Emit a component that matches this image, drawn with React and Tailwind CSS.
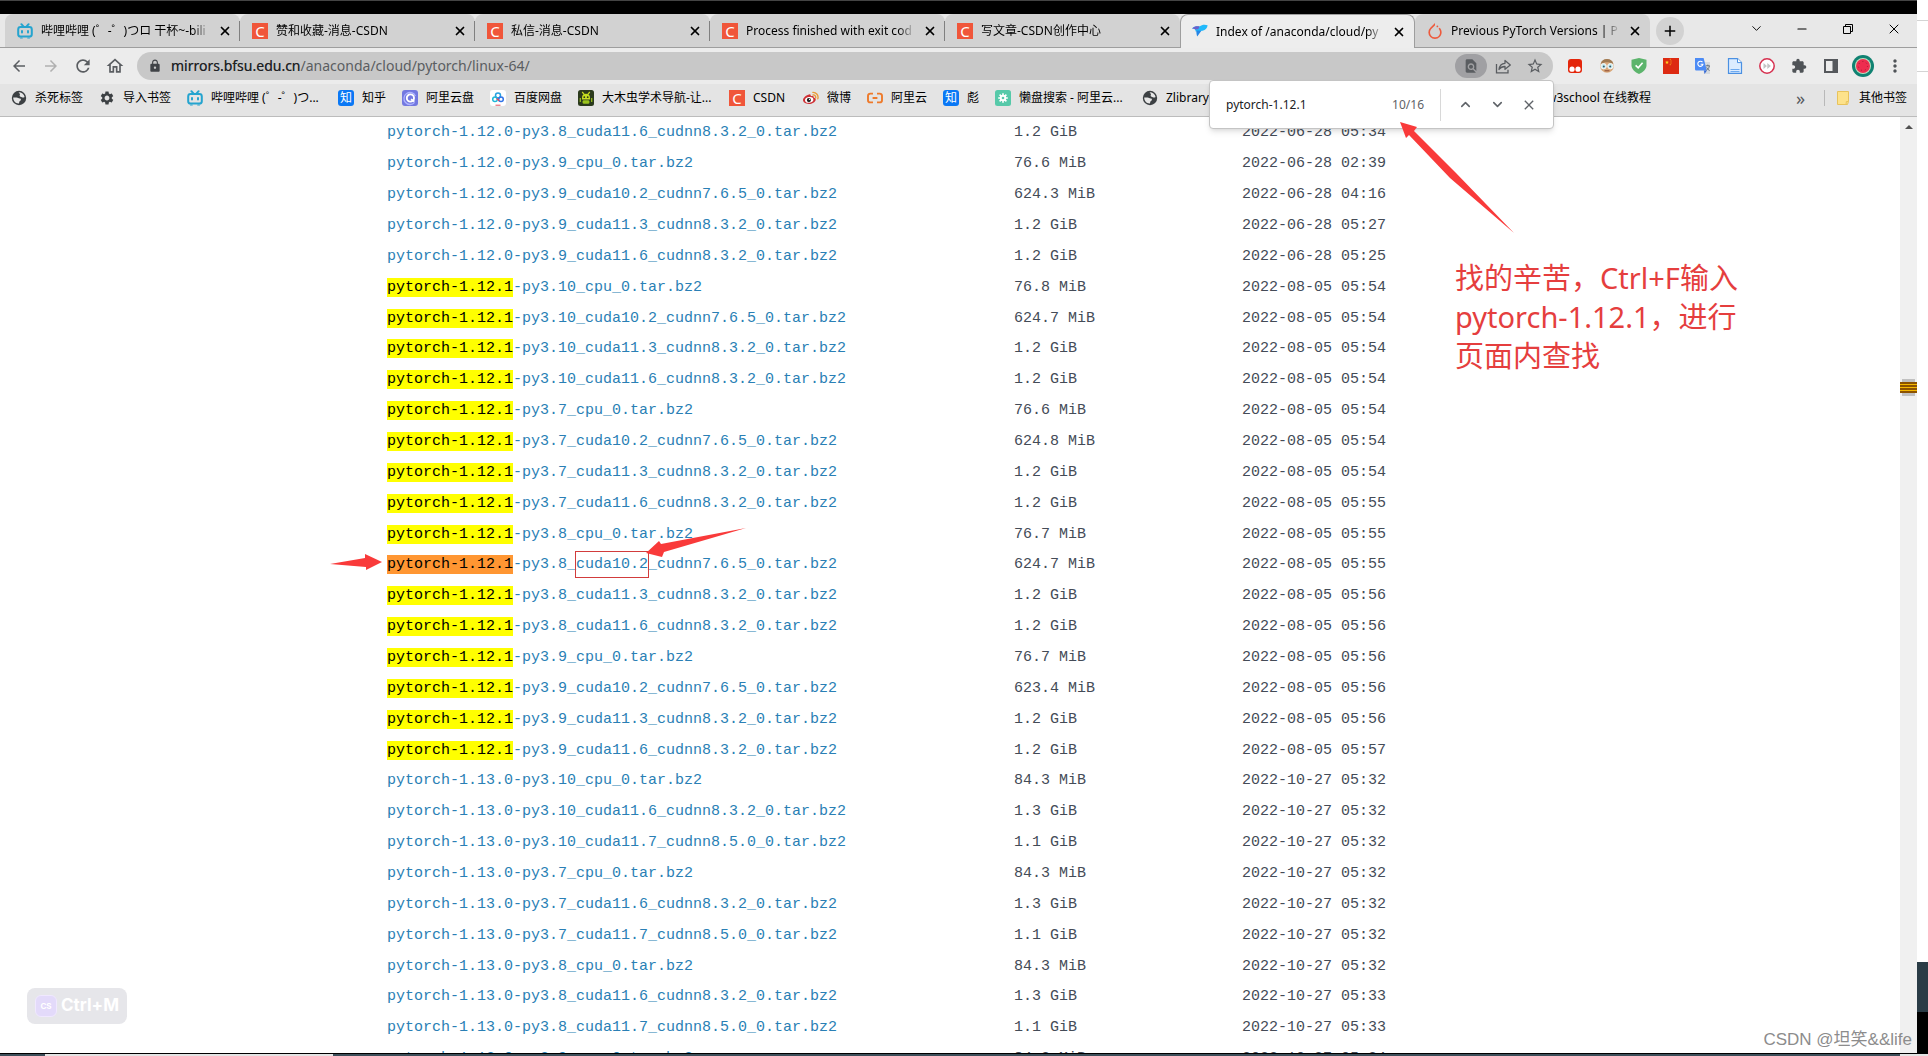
import { useState } from "react";
import { ChevronDown, ChevronUp, Minus, X } from "lucide-react";
import {
    MdArrowBack,
    MdArrowForward,
    MdRefresh,
    MdOutlineHome,
    MdLock,
    MdStarOutline,
    MdFindInPage,
    MdSettings,
    MdExtension,
    MdMoreVert,
    MdClose,
    MdAdd,
} from "react-icons/md";
import { SiPytorch } from "react-icons/si";

const files = [
    ["1.12.0", "-py3.8_cuda11.6_cudnn8.3.2_0.tar.bz2", "1.2 GiB", "2022-06-28 05:34"],
    ["1.12.0", "-py3.9_cpu_0.tar.bz2", "76.6 MiB", "2022-06-28 02:39"],
    ["1.12.0", "-py3.9_cuda10.2_cudnn7.6.5_0.tar.bz2", "624.3 MiB", "2022-06-28 04:16"],
    ["1.12.0", "-py3.9_cuda11.3_cudnn8.3.2_0.tar.bz2", "1.2 GiB", "2022-06-28 05:27"],
    ["1.12.0", "-py3.9_cuda11.6_cudnn8.3.2_0.tar.bz2", "1.2 GiB", "2022-06-28 05:25"],
    ["1.12.1", "-py3.10_cpu_0.tar.bz2", "76.8 MiB", "2022-08-05 05:54"],
    ["1.12.1", "-py3.10_cuda10.2_cudnn7.6.5_0.tar.bz2", "624.7 MiB", "2022-08-05 05:54"],
    ["1.12.1", "-py3.10_cuda11.3_cudnn8.3.2_0.tar.bz2", "1.2 GiB", "2022-08-05 05:54"],
    ["1.12.1", "-py3.10_cuda11.6_cudnn8.3.2_0.tar.bz2", "1.2 GiB", "2022-08-05 05:54"],
    ["1.12.1", "-py3.7_cpu_0.tar.bz2", "76.6 MiB", "2022-08-05 05:54"],
    ["1.12.1", "-py3.7_cuda10.2_cudnn7.6.5_0.tar.bz2", "624.8 MiB", "2022-08-05 05:54"],
    ["1.12.1", "-py3.7_cuda11.3_cudnn8.3.2_0.tar.bz2", "1.2 GiB", "2022-08-05 05:54"],
    ["1.12.1", "-py3.7_cuda11.6_cudnn8.3.2_0.tar.bz2", "1.2 GiB", "2022-08-05 05:55"],
    ["1.12.1", "-py3.8_cpu_0.tar.bz2", "76.7 MiB", "2022-08-05 05:55"],
    ["1.12.1", "-py3.8_cuda10.2_cudnn7.6.5_0.tar.bz2", "624.7 MiB", "2022-08-05 05:55"],
    ["1.12.1", "-py3.8_cuda11.3_cudnn8.3.2_0.tar.bz2", "1.2 GiB", "2022-08-05 05:56"],
    ["1.12.1", "-py3.8_cuda11.6_cudnn8.3.2_0.tar.bz2", "1.2 GiB", "2022-08-05 05:56"],
    ["1.12.1", "-py3.9_cpu_0.tar.bz2", "76.7 MiB", "2022-08-05 05:56"],
    ["1.12.1", "-py3.9_cuda10.2_cudnn7.6.5_0.tar.bz2", "623.4 MiB", "2022-08-05 05:56"],
    ["1.12.1", "-py3.9_cuda11.3_cudnn8.3.2_0.tar.bz2", "1.2 GiB", "2022-08-05 05:56"],
    ["1.12.1", "-py3.9_cuda11.6_cudnn8.3.2_0.tar.bz2", "1.2 GiB", "2022-08-05 05:57"],
    ["1.13.0", "-py3.10_cpu_0.tar.bz2", "84.3 MiB", "2022-10-27 05:32"],
    ["1.13.0", "-py3.10_cuda11.6_cudnn8.3.2_0.tar.bz2", "1.3 GiB", "2022-10-27 05:32"],
    ["1.13.0", "-py3.10_cuda11.7_cudnn8.5.0_0.tar.bz2", "1.1 GiB", "2022-10-27 05:32"],
    ["1.13.0", "-py3.7_cpu_0.tar.bz2", "84.3 MiB", "2022-10-27 05:32"],
    ["1.13.0", "-py3.7_cuda11.6_cudnn8.3.2_0.tar.bz2", "1.3 GiB", "2022-10-27 05:32"],
    ["1.13.0", "-py3.7_cuda11.7_cudnn8.5.0_0.tar.bz2", "1.1 GiB", "2022-10-27 05:32"],
    ["1.13.0", "-py3.8_cpu_0.tar.bz2", "84.3 MiB", "2022-10-27 05:32"],
    ["1.13.0", "-py3.8_cuda11.6_cudnn8.3.2_0.tar.bz2", "1.3 GiB", "2022-10-27 05:33"],
    ["1.13.0", "-py3.8_cuda11.7_cudnn8.5.0_0.tar.bz2", "1.1 GiB", "2022-10-27 05:33"],
    ["1.13.0", "-py3.9_cpu_0.tar.bz2", "84.3 MiB", "2022-10-27 05:34"],
];

const CURRENT = 14;

/* ---------- site icons ---------- */

function Bilibili() {
    return (
        <svg viewBox="0 0 16 16" className="size-4 shrink-0" fill="none" stroke="#25a4cf" strokeWidth="2" strokeLinecap="round">
            <rect x="1.2" y="4" width="13.6" height="9.6" rx="2.4" />
            <path d="M4.4 1.2l2 2.2M11.6 1.2l-2 2.2M5 8v1.4M11 8v1.4" />
            <path d="M3.6 15h1.6M10.8 15h1.6" strokeWidth="1.2" />
        </svg>
    );
}

function Csdn() {
    return (
        <span className="flex size-4 shrink-0 items-center justify-center bg-[#f0563a] text-[15px] leading-4 text-white">C</span>
    );
}

function Zhihu() {
    return (
        <span className="flex size-4 shrink-0 items-center justify-center rounded-[3px] bg-[#0a78f5] text-[12px] leading-4 text-white">知</span>
    );
}

function Globe() {
    return (
        <svg viewBox="0 0 16 16" className="size-4 shrink-0">
            <circle cx="8" cy="8" r="7.2" fill="#3c4043" />
            <path d="M2.2 7.6h3.4c1.4 0 1.8 1 3 1 .9 0 1.5.5 1.3 1.4-.2.8-1.2.9-1.5 1.6l-.5 1.9C4.6 13.7 2.2 10.9 2.2 7.6z" fill="#e6e6e6" />
            <path d="M7.6 2.3c3 0 5.4 1.7 6 4.7-.9.7-2 .8-2.8.2-.7-.6-1.800-.3-2.100-1.200-.3-.8.5-1.300.2-2-.3-.6-1-.7-1.300-1.700z" fill="#e6e6e6" />
        </svg>
    );
}

function AliyunDrive() {
    return (
        <svg viewBox="0 0 16 16" className="size-4 shrink-0">
            <rect width="16" height="16" rx="3" fill="#7378e0" />
            <path d="M12.6 12.3A6 6 0 1 1 13.4 6" fill="none" stroke="#aeb4ff" strokeWidth="1.3" />
            <circle cx="8.4" cy="8" r="3.6" fill="none" stroke="#fff" strokeWidth="1.9" />
            <path d="M9 9.2l3.4 2.4" stroke="#fff" strokeWidth="1.8" />
        </svg>
    );
}

function BaiduDrive() {
    return (
        <svg viewBox="0 0 16 16" className="size-4 shrink-0" fill="none" strokeWidth="1.5">
            <rect width="16" height="16" rx="3" fill="#fff" />
            <circle cx="8" cy="5.5" r="2.5" stroke="#28a0e0" />
            <circle cx="5" cy="9.3" r="2.3" stroke="#20b6d8" />
            <circle cx="11" cy="9.3" r="2.3" stroke="#3274e8" />
            <path d="M6.7 8.5l2.6 2.3" stroke="#e54b5b" />
            <path d="M5.5 15.2h5" stroke="#e54b5b" strokeWidth="1" />
        </svg>
    );
}

function Bug() {
    return (
        <svg viewBox="0 0 16 16" className="size-4 shrink-0">
            <rect width="16" height="16" rx="2.5" fill="#2b3a1c" />
            <path d="M4.2 2l2 2.4M11.8 2l-2 2.4" stroke="#c6e020" strokeWidth="1.2" />
            <path d="M4 8a4 4.2 0 0 1 8 0v1.5H4z" fill="#c6e020" />
            <rect x="4.6" y="10.2" width="6.8" height="3.6" rx="1.4" fill="#9bc41c" />
            <path d="M2.3 8v4M13.7 8v4" stroke="#9bc41c" strokeWidth="1.2" />
            <circle cx="6.3" cy="7.2" r=".9" fill="#2b3a1c" />
            <circle cx="9.7" cy="7.2" r=".9" fill="#2b3a1c" />
        </svg>
    );
}

function Weibo() {
    return (
        <svg viewBox="0 0 16 16" className="size-4 shrink-0" fill="none">
            <path d="M6.2 4.4C7.400 4.200 8 5 7.700 6.200c1.600-.6 3.200-.4 3 1.200 1.600.4 2.300 1.300 2 2.500-.5 2.300-3.500 4-6.800 4C2.600 13.900 0 12.300 0 10c0-2.300 3.500-5.200 6.200-5.600z" fill="#cf2f34" />
            <ellipse cx="6.200" cy="9.900" rx="4.200" ry="2.900" fill="#fff" transform="rotate(-8 6.200 9.900)" />
            <circle cx="5.900" cy="10.100" r="2.100" fill="#222" />
            <circle cx="6.600" cy="9.400" r=".6" fill="#fff" />
            <path d="M10 5a2.300 2.300 0 0 1 2.600 3M9.800 2.300a5 5 0 0 1 5 6.500" stroke="#eb9a35" strokeWidth="1.300" strokeLinecap="round" />
        </svg>
    );
}

function Aliyun() {
    return (
        <svg viewBox="0 0 16 16" className="size-4 shrink-0" fill="none" stroke="#ee7a2b" strokeWidth="1.9">
            <path d="M6 3.6H3.2A2.2 2.2 0 0 0 1 5.8v4.400a2.200 2.200 0 0 0 2.200 2.200H6M10 3.600h2.800A2.200 2.200 0 0 1 15 5.800v4.400a2.200 2.200 0 0 1-2.200 2.200H10M5.600 8h4.800" />
        </svg>
    );
}

function Lanpan() {
    return (
        <svg viewBox="0 0 16 16" className="size-4 shrink-0">
            <rect width="16" height="16" rx="2.5" fill="#56c9a9" />
            <path d="M8 3.2v9.6M3.2 8h9.6M4.6 4.6l6.8 6.8M11.4 4.6l-6.8 6.8" stroke="#fff" strokeWidth="1.6" />
            <circle cx="8" cy="8" r="3.2" fill="#fff" />
            <circle cx="8" cy="8" r="1.3" fill="#56c9a9" />
        </svg>
    );
}

function Bird() {
    return (
        <svg viewBox="0 0 16 16" className="size-4 shrink-0">
            <path d="M0 4.600C2 2.200 5 2 7.600 2.400 10 .4 13 .3 15.600 1.200c-.3 2.600-2 5-5 5.600L3.600 7.400C3.800 5.900 2.400 4.600 0 4.600z" fill="#21b9fb" />
            <path d="M0 4.600C2 2.200 5 2 7.600 2.400L6.200 5.200 3.400 5.600C2.600 4.900 1.400 4.600 0 4.600z" fill="#6f5fc8" />
            <path d="M4.400 6.400l5 .4-4.200 5.600c-.5-1.600-1-4-.8-6z" fill="#2486e6" />
        </svg>
    );
}

function Folder() {
    return (
        <svg viewBox="0 0 16 16" className="size-4 shrink-0">
            <path d="M2.5 1.500h11v10l-1 3h-10z" fill="#fde28b" stroke="#e8c35c" />
            <path d="M11 14.500l.4-3h2" fill="none" stroke="#e8c35c" />
        </svg>
    );
}

/* ---------- extension icons ---------- */

const extensions = [
    ["Tampermonkey", (
        <svg viewBox="0 0 16 16" className="size-4">
            <rect x="1" y="1" width="14" height="14" rx="3" fill="#e4260b" />
            <circle cx="5" cy="11.2" r="2.6" fill="#fff" />
            <circle cx="11" cy="11.2" r="2.6" fill="#fff" />
        </svg>
    )],
    ["Reader", (
        <svg viewBox="0 0 16 16" className="size-4">
            <circle cx="8" cy="8" r="6.8" fill="#d9a87a" />
            <path d="M1.6 6a6.6 6.6 0 0 1 12.8 0C10 3.6 6 3.6 1.6 6z" fill="#a07a52" />
            <circle cx="4.6" cy="8.2" r="2.7" fill="#c8edf0" stroke="#f5f5f5" />
            <circle cx="11.4" cy="8.2" r="2.7" fill="#c8edf0" stroke="#f5f5f5" />
            <circle cx="4.8" cy="8.4" r="1" fill="#34576b" />
            <circle cx="11.2" cy="8.4" r="1" fill="#34576b" />
            <path d="M5.6 12.8h4.8" stroke="#8c4b32" />
        </svg>
    )],
    ["Adblocker", (
        <svg viewBox="0 0 16 16" className="size-4">
            <path d="M8 0l7.5 1.8v5.4C15.5 11 12 14.4 8 16 4 14.4.5 11 .5 7.2V1.8z" fill="#5cb46c" />
            <path d="M4.6 7.3l2.6 2.5 4.4-5" fill="none" stroke="#fff" strokeWidth="1.6" />
        </svg>
    )],
    ["China", (
        <svg viewBox="0 0 16 16" className="size-4">
            <rect width="16" height="16" fill="#dd2a12" />
            <path d="M4 2.4l.6 1.3 1.3.1-1 .9.3 1.300L4 5.300l-1.200.7.3-1.300-1-.9 1.300-.1z" fill="#ffcf22" />
            <path d="M6.800 1.300h.8M7.600 3h.8M7.600 5h.8M6.800 6.700h.8" stroke="#ffcf22" />
        </svg>
    )],
    ["Translate", (
        <svg viewBox="0 0 16 16" className="size-4">
            <path d="M7 4h8v12H9z" fill="#d6dade" />
            <path d="M0 0h8.600l3.200 12.400H1.200A1.200 1.200 0 0 1 0 11.200z" fill="#4c8bf5" />
            <path d="M7.500 4.200A2.600 2.600 0 1 0 8 6.200H5.600" fill="none" stroke="#fff" strokeWidth="1.100" />
            <path d="M9 12.400h3L9.500 16z" fill="#3367d6" />
            <path d="M10.800 7.800h4M12.800 6.600v1.200M14.400 8c-.4 2-1.600 3.400-3 4.200M11.600 9.400c.6 1.500 1.800 2.500 3 3.200" fill="none" stroke="#5f6b78" strokeWidth=".9" />
        </svg>
    )],
    ["Document", (
        <svg viewBox="0 0 16 16" className="size-4">
            <path d="M1.500.6h9l4 4v10.800h-13z" fill="#dcecff" stroke="#4a90e2" strokeWidth="1.200" />
            <path d="M10.500.6v4h4" fill="#fff" stroke="#4a90e2" />
            <path d="M3.500 11.500h9M3.500 13.500h9" stroke="#6eaaf0" strokeWidth="1.200" />
        </svg>
    )],
    ["Speed", (
        <svg viewBox="0 0 16 16" className="size-4">
            <circle cx="8" cy="8" r="7.2" fill="#fff" stroke="#d6304f" strokeWidth="1.5" />
            <path d="M4.500 5v6L8 8zM8.300 5v6l3.600-3z" fill="#c4c4c4" />
        </svg>
    )],
    ["Extensions", <MdExtension className="size-4 text-[#4f5357]" />],
    ["Side panel", (
        <svg viewBox="0 0 16 16" className="size-4">
            <path d="M2 2h12v12H2z" fill="none" stroke="#55585c" strokeWidth="2" />
            <path d="M9.500 2H14v12H9.500z" fill="#55585c" />
        </svg>
    )],
    ["Profile", (
        <svg viewBox="0 0 22 22" className="size-[22px]">
            <circle cx="11" cy="11" r="11" fill="#108272" />
            <circle cx="11" cy="11" r="8" fill="#bfe0c0" />
            <circle cx="11" cy="11" r="7" fill="#ee2d4f" />
            <circle cx="11" cy="11" r="4.5" fill="none" stroke="#9e1f38" strokeDasharray="1 3" />
        </svg>
    )],
    ["Menu", <MdMoreVert className="size-5 text-[#4f5357]" />],
];

const tabs = [
    [<Bilibili />, "哔哩哔哩 (゜-゜)つロ 干杯~-bili"],
    [<Csdn />, "赞和收藏-消息-CSDN"],
    [<Csdn />, "私信-消息-CSDN"],
    [<Csdn />, "Process finished with exit cod"],
    [<Csdn />, "写文章-CSDN创作中心"],
    [<Bird />, "Index of /anaconda/cloud/py"],
    [<SiPytorch className="size-4 shrink-0 text-[#ee5a3c]" />, "Previous PyTorch Versions | P"],
];

const bookmarks = [
    [<Globe />, "杀死标签", "w-12"],
    [<MdSettings className="size-4 shrink-0 text-[#3c4043]" />, "导入书签", "w-12"],
    [<Bilibili />, "哔哩哔哩 (゜-゜)つ...", "w-[111px]"],
    [<Zhihu />, "知乎", "w-6"],
    [<AliyunDrive />, "阿里云盘", "w-12"],
    [<BaiduDrive />, "百度网盘", "w-12"],
    [<Bug />, "大木虫学术导航-让...", "w-[111px]"],
    [<Csdn />, "CSDN", "w-[34px]"],
    [<Weibo />, "微博", "w-6"],
    [<Aliyun />, "阿里云", "w-9"],
    [<Zhihu />, "彪", "w-3"],
    [<Lanpan />, "懒盘搜索 - 阿里云...", "w-[107px]"],
    [<Globe />, "Zlibrary", "w-[363px]"],
];

function TabStrip({ active, onSelect }) {
    return (
        <div className="flex h-[34px] items-stretch border-b border-[#9e9e9e] bg-[#e8e8e8] pl-[5px]">
            {tabs.map(([icon, title], i) => (
                <div
                    key={title}
                    className={
                        i === active
                            ? "-mb-px flex w-[235px] min-w-0 items-center gap-2 rounded-t-lg border border-b-0 border-[#9e9e9e] bg-[#ededed] pl-[11px] pr-2"
                            : "flex w-[235px] min-w-0 items-center gap-2 rounded-t-lg bg-[#d2d2d2] pl-3 pr-2"
                    }
                >
                    {icon}
                    <button
                        onClick={() => onSelect(i)}
                        className="min-w-0 flex-1 overflow-hidden whitespace-nowrap mask-r-from-90% text-left text-[12px] leading-5"
                    >
                        {title}
                    </button>
                    <button aria-label="Close tab" className="shrink-0">
                        <X size={14} strokeWidth={3} />
                    </button>
                    {i !== active && i !== active - 1 && i < tabs.length - 1 && (
                        <span className="-ml-px -mr-2 h-5 w-px shrink-0 bg-[#808080]" />
                    )}
                </div>
            ))}
            <button aria-label="New tab" className="ml-[6px] flex size-7 shrink-0 items-center justify-center self-center rounded-full bg-[#d2d2d2]">
                <MdAdd className="size-[18px]" />
            </button>
            <div className="ml-auto flex items-center pb-1">
                <button aria-label="Search tabs" className="flex w-[46px] justify-center"><ChevronDown size={15} strokeWidth={1.5} /></button>
                <button aria-label="Minimize" className="flex w-[46px] justify-center"><Minus size={14} strokeWidth={1.8} /></button>
                <button aria-label="Restore" className="flex w-[46px] justify-center">
                    <svg viewBox="0 0 10 10" className="size-[10px]" fill="none" stroke="#000">
                        <path d="M.5 2.5h7v7h-7zM2.500 2.500v-2h7v7h-2" />
                    </svg>
                </button>
                <button aria-label="Close" className="flex w-[46px] justify-center"><X size={16} strokeWidth={1.5} /></button>
            </div>
        </div>
    );
}

function Toolbar() {
    const [url, setUrl] = useState("mirrors.bfsu.edu.cn/anaconda/cloud/pytorch/linux-64/");
    const host = url.split("/")[0];

    return (
        <div className="flex h-9 items-center bg-[#ececec] pl-[3px] pr-[6px] text-[#5a5d61]">
            <button aria-label="Back" className="flex w-8 justify-center"><MdArrowBack className="size-[18px]" /></button>
            <button aria-label="Forward" className="flex w-8 justify-center text-[#b0b0b0]"><MdArrowForward className="size-[18px]" /></button>
            <button aria-label="Reload" className="flex w-8 justify-center"><MdRefresh className="size-5" /></button>
            <button aria-label="Home" className="flex w-8 justify-center"><MdOutlineHome className="size-5" /></button>

            {/* Address bar */}
            <div className="ml-[6px] flex h-7 min-w-0 flex-1 items-center rounded-full bg-[#c8c8c8] pl-[11px] pr-[2px]">
                <MdLock className="size-[14px] shrink-0 text-[#404347]" />
                <div className="relative ml-[9px] min-w-0 flex-1 text-[14px] leading-6">
                    <input
                        aria-label="Address"
                        value={url}
                        onChange={(e) => setUrl(e.target.value)}
                        className="block w-full bg-transparent text-[#5a5d61] outline-none"
                    />
                    <span aria-hidden="true" className="pointer-events-none absolute left-0 top-0 text-[#202124]">{host}</span>
                </div>
                <button aria-label="Find in page" className="flex h-6 w-8 items-center justify-center rounded-full bg-[#a0a0a3]"><MdFindInPage className="size-4" /></button>
                <button aria-label="Share" className="flex w-8 justify-center">
                    <svg viewBox="0 0 16 16" className="size-4" fill="none" stroke="currentColor" strokeWidth="1.3">
                        <path d="M1.5 6v8.8h11.5v-3" />
                        <path d="M4 11.5c.5-4 2.5-6 6-6.2V2.5L15.3 7 10 11.3V8.5c-2.8 0-4.5.8-6 3z" strokeLinejoin="round" />
                    </svg>
                </button>
                <button aria-label="Bookmark" className="flex w-8 justify-center"><MdStarOutline className="size-[18px]" /></button>
            </div>

            <div className="ml-[6px] flex items-center">
                {extensions.map(([name, icon]) => (
                    <button key={name} aria-label={name} className="flex w-8 items-center justify-center">{icon}</button>
                ))}
            </div>
        </div>
    );
}

function BookmarkBar() {
    return (
        <nav className="flex h-[33px] items-center border-b border-[#bcbcbc] bg-[#e4e4e4] pb-1 pl-[11px] pr-[10px] text-[12px] leading-5">
            {bookmarks.map(([icon, label, width]) => (
                <a key={label} href="#bookmark" className="mr-4 flex shrink-0 items-center gap-2">
                    {icon}
                    <span className={`${width} overflow-hidden whitespace-nowrap`}>{label}</span>
                </a>
            ))}
            <a href="#bookmark" className="w-[106px] shrink-0 whitespace-nowrap text-right">w3school 在线教程</a>
            <span className="ml-auto w-7 text-[18px] text-[#55585c]">»</span>
            <span className="h-4 w-px bg-[#b8b8b8]" />
            <a href="#bookmark" className="ml-[10px] flex shrink-0 items-center gap-2">
                <Folder />
                其他书签
            </a>
        </nav>
    );
}

function FindBar() {
    const [query, setQuery] = useState("pytorch-1.12.1");

    return (
        <div className="absolute right-[363px] top-20 z-10 flex h-[49px] w-[345px] items-center rounded border border-[#c4c4c4] bg-white pl-4 pr-2 text-[12px] text-[#5f6368] shadow-md">
            <input
                aria-label="Find"
                value={query}
                onChange={(e) => setQuery(e.target.value)}
                className="min-w-0 flex-1 text-[#202124] outline-none"
            />
            <span className="mr-4">10/16</span>
            <span className="mr-2 h-8 w-px bg-[#d8d8d8]" />
            <button aria-label="Previous" className="flex w-8 justify-center"><ChevronUp size={15} strokeWidth={2.5} /></button>
            <button aria-label="Next" className="flex w-8 justify-center"><ChevronDown size={15} strokeWidth={2.5} /></button>
            <button aria-label="Close find bar" className="flex w-8 justify-center"><MdClose className="size-4" /></button>
        </div>
    );
}

function FileName({ version, rest, current }) {
    const name = `pytorch-${version}`;

    if (version !== "1.12.1") {
        return <>{name}{rest}</>;
    }
    if (current) {
        const [before, after] = rest.split("cuda10.2");
        return (
            <>
                <mark className="bg-[#ff9632] py-px text-black">{name}</mark>
                {before}
                <span className="py-1 outline outline-[#d23c3c]">cuda10.2</span>
                {after}
            </>
        );
    }
    return (
        <>
            <mark className="bg-[#ffff00] py-px text-black">{name}</mark>
            {rest}
        </>
    );
}

function FileTable() {
    return (
        <table className="h-[957px] w-full table-fixed font-['Liberation_Mono',monospace] text-[15px] leading-5 text-[#444b57]">
            <colgroup>
                <col className="w-[55%]" />
                <col className="w-[20%]" />
                <col className="w-[25%]" />
            </colgroup>
            <tbody>
                {files.map(([version, rest, size, date], i) => (
                    <tr key={version + rest}>
                        <td className="whitespace-nowrap pl-[7px]">
                            <a href="#file" className="text-[#2a7fb5]">
                                <FileName version={version} rest={rest} current={i === CURRENT} />
                            </a>
                        </td>
                        <td className="pl-[7px]">{size}</td>
                        <td className="pl-[7px]">{date}</td>
                    </tr>
                ))}
            </tbody>
        </table>
    );
}

function Annotations() {
    return (
        <>
            <svg className="pointer-events-none absolute left-0 top-0 z-20 h-full w-full overflow-visible" fill="#f93a3a">
                {/* list arrows */}
                <path d="M-50 447L-15 441V437L2 445L-14 453V450Z" />
                <path d="M366 411L281 427L279 424L266 436L282 440L284 435Z" />
                {/* find bar arrow */}
                <path d="M1020 5L1037 10L1034 14L1076 56L1134 116L1070 61L1029 18L1026 21Z" />
            </svg>
            <p className="absolute left-[1075px] top-[141px] w-[300px] text-[29px] leading-[39px] text-[#e53e3e]">
                找的辛苦，Ctrl+F输入
                <br />
                pytorch-1.12.1，进行
                <br />
                页面内查找
            </p>
        </>
    );
}

function ScrollBar() {
    return (
        <div className="flex w-[17px] shrink-0 flex-col items-center bg-[#f0f0f0] pt-2">
            <span className="h-0 w-0 border-x-4 border-b-4 border-x-transparent border-b-[#505050]" />
            <div className="mt-[250px] flex h-[17px] w-[13px] flex-col items-center justify-center bg-[#c1c1c1]">
                <div className="flex h-[11px] w-[17px] flex-col justify-evenly bg-[#8c5200]">
                    <span className="h-px bg-[#f5b800]" />
                    <span className="h-px bg-[#f5b800]" />
                    <span className="h-px bg-[#f5b800]" />
                </div>
            </div>
        </div>
    );
}

export default function App() {
    const [active, setActive] = useState(5);

    return (
        <div className="flex h-screen flex-col overflow-hidden bg-white font-['Noto_Sans','Noto_Sans_CJK_SC',sans-serif] text-black">
            <div className="flex min-h-0 flex-1">
                <div className="relative flex min-w-0 flex-1 flex-col">
                    <div className="h-[14px] shrink-0 border-t border-[#444] bg-black" />
                    <header className="shrink-0">
                        <TabStrip active={active} onSelect={setActive} />
                        <Toolbar />
                        <BookmarkBar />
                    </header>
                    <FindBar />

                    <main className="flex min-h-0 flex-1">
                        <div className="min-w-0 flex-1 overflow-hidden">
                            <div className="relative mx-auto max-w-[1140px] pt-px">
                                <FileTable />
                                <Annotations />
                            </div>
                        </div>
                        <ScrollBar />
                    </main>

                    {/* Shortcut badge */}
                    <div className="absolute bottom-[29px] left-[27px] flex h-9 items-center gap-1 rounded-lg bg-[#e6e6ea] px-2 font-['Inter',sans-serif] text-[17px] font-bold text-white">
                        <span className="flex size-[22px] items-center justify-center rounded-md border border-[#f0e8ff] bg-[#e3dafa] text-[8px]">CS</span>
                        Ctrl+M
                    </div>
                </div>

                {/* Window behind */}
                <div className="flex w-[11px] shrink-0 flex-col">
                    <div className="mt-5 h-[52px] border-y border-[#d4d4d4]" />
                    <div className="mt-auto h-[50px] bg-[#2a3c46]" />
                    <div className="h-[41px] bg-black" />
                </div>
            </div>
            <div className="flex h-[3px] shrink-0 border-t border-black bg-[#3d4f5a]">
                <div className="ml-[45px] w-[288px] bg-[#e4e4e4]" />
                <div className="ml-auto w-7 bg-[#e4e4e4]" />
            </div>

            <div className="absolute bottom-0 right-4 z-30 font-['Liberation_Sans','Noto_Sans_CJK_SC',sans-serif] text-[17px] leading-8 text-[#8c8c8c]">
                CSDN @坦笑&&life
            </div>
        </div>
    );
}
